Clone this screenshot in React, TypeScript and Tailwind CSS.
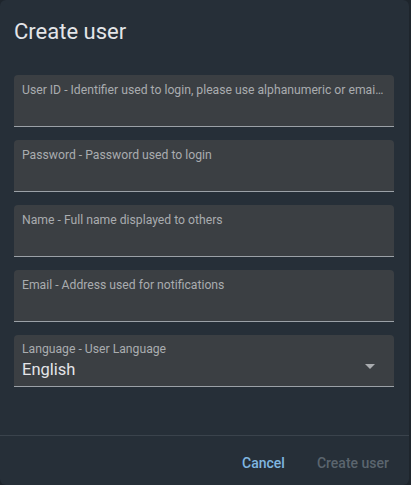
import React from "react";

const fields = [
  "User ID - Identifier used to login, please use alphanumeric or email address",
  "Password - Password used to login",
  "Name - Full name displayed to others",
  "Email - Address used for notifications",
];

function Field({ label }: { label: string }) {
  return (
    <div className="h-[52px] rounded-t-[4px] bg-[#3b3f43] border-b border-[#9ba1a7] pl-2 pr-[10px] pt-[6px]">
      <div className="text-[12.2px] leading-[18px] text-[#a9acaf] truncate">{label}</div>
    </div>
  );
}

export default function App() {
  return (
    <div className="w-[411px] h-[485px] bg-[#1e252c]" style={{ fontFamily: "Roboto, 'Noto Sans', sans-serif" }}>
      <div className="w-[409px] h-[485px] bg-[#262f38] rounded-[6px] flex flex-col">
        <div className="px-[14px] pt-[18px] pb-[29px] text-[22px] leading-[28px] text-[#e3e5e8]">Create user</div>
        <div className="px-[14px] flex flex-col gap-[13px] w-[408px]">
          {fields.map((f) => (
            <Field key={f} label={f} />
          ))}
          <div className="h-[52px] rounded-t-[4px] bg-[#3b3f43] border-b border-[#9ba1a7] pl-2 pr-[19px] pt-[5px] flex items-start justify-between">
            <div>
              <div className="text-[12.2px] leading-[18px] text-[#a9acaf]">Language - User Language</div>
              <div className="text-[16.5px] leading-[22px] text-[#e3e5e8] mt-[1px]">English</div>
            </div>
            <svg width="10" height="5" viewBox="0 0 10 5" className="mt-[24px]">
              <path d="M0 0 L10 0 L5 5 Z" fill="#a9acaf" />
            </svg>
          </div>
        </div>
        <div className="flex-1" />
        <div className="border-t border-[#3a434c] h-[50px] flex items-center justify-end gap-[32px] pr-[20px] pt-[6px]">
          <span className="text-[14px] font-medium text-[#7fb6e0]">Cancel</span>
          <span className="text-[14px] font-medium text-[#5b656e]">Create user</span>
        </div>
      </div>
    </div>
  );
}
